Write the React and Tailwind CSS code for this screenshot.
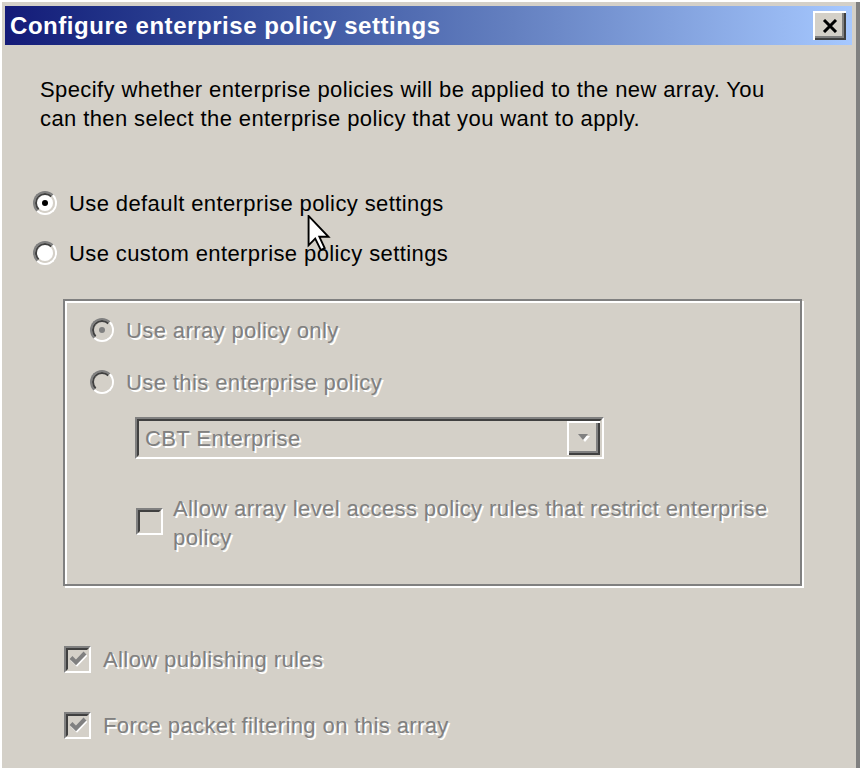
import React from "react";

const font = { fontFamily: '"Liberation Sans", Arial, sans-serif' };

function Radio({ checked, disabled }) {
    return (
        <span className="relative inline-flex h-6 w-6 shrink-0 rounded-full border-2 border-t-[#808080] border-l-[#808080] border-b-white border-r-white">
            <span
                className={
                    "flex h-full w-full items-center justify-center rounded-full border-2 border-t-[#404040] border-l-[#404040] border-b-[#d4d0c8] border-r-[#d4d0c8] " +
                    (disabled ? "bg-[#d4d0c8]" : "bg-white")
                }
            >
                {checked && (
                    <span className={"h-[6px] w-[6px] rounded-full " + (disabled ? "bg-[#808080]" : "bg-black")} />
                )}
            </span>
        </span>
    );
}

function Checkbox({ checked, disabled }) {
    return (
        <span className="inline-flex h-[27px] w-[27px] shrink-0 border-2 border-t-[#808080] border-l-[#808080] border-b-white border-r-white">
            <span
                className={
                    "flex h-full w-full items-center justify-center border-2 border-t-[#404040] border-l-[#404040] border-b-[#d4d0c8] border-r-[#d4d0c8] " +
                    (disabled ? "bg-[#d4d0c8]" : "bg-white")
                }
            >
                {checked && (
                    <svg width="18" height="16" viewBox="0 0 18 16">
                        <path d="M2 6.5 L7 11.5 L16 2" fill="none" stroke="#fff" strokeWidth="4" transform="translate(1 1.5)" />
                        <path d="M2 6.5 L7 11.5 L16 2" fill="none" stroke="#808080" strokeWidth="4" />
                    </svg>
                )}
            </span>
        </span>
    );
}

function Label({ children, disabled }) {
    return (
        <span
            className={
                disabled
                    ? "text-[#808080] [text-shadow:2px_2px_0_#ffffff]"
                    : "text-black"
            }
        >
            {children}
        </span>
    );
}

export default function App() {
    return (
        <div
            className="relative h-[768px] w-[860px] overflow-hidden bg-[#d4d0c8] pt-[6px] pl-[5px] pr-[8px] text-[22px] leading-[29px] tracking-[0.4px] shadow-[inset_2px_2px_0_#ffffff,inset_-4px_0_0_#808080]"
            style={font}
        >
            {/* Title bar */}
            <div className="flex h-[39px] items-center justify-between bg-gradient-to-r from-[#141a78] via-[#6480c0] via-60% to-[#a6c8ff] pl-[5px] pr-[6px]">
                <span className="text-[24px] font-bold tracking-[0.55px] text-white">
                    Configure enterprise policy settings
                </span>
                <button className="flex h-[29px] w-[33px] items-center justify-center bg-[#d4d0c8] shadow-[inset_2px_2px_0_#ffffff,inset_-2px_-2px_0_#404040,inset_-4px_-4px_0_#808080]">
                    <svg width="16" height="14" viewBox="0 0 16 14">
                        <path d="M2 1 L14 13 M14 1 L2 13" stroke="#000" strokeWidth="3" />
                    </svg>
                </button>
            </div>

            {/* Body */}
            <div className="pl-[28px] pr-[30px]">
                <p className="mt-[30px] pl-[7px]">
                    Specify whether enterprise policies will be applied to the new array. You
                    <br />
                    can then select the enterprise policy that you want to apply.
                </p>

                <div className="mt-[52px] flex flex-col gap-[14px]">
                    <label className="flex h-[36px] items-center gap-[12px]">
                        <Radio checked />
                        <Label>Use default enterprise policy settings</Label>
                    </label>
                    <label className="flex h-[36px] items-center gap-[12px]">
                        <Radio />
                        <Label>Use custom enterprise policy settings</Label>
                    </label>
                </div>

                {/* Group box */}
                <div className="ml-[30px] mt-[28px] h-[287px] w-[739px] border-2 border-[#808080] pl-[25px] pt-[11px] shadow-[inset_2px_2px_0_#ffffff,2px_2px_0_#ffffff]">
                    <div className="flex flex-col gap-[16px]">
                        <div className="flex h-[36px] items-center gap-[12px]">
                            <Radio checked disabled />
                            <Label disabled>Use array policy only</Label>
                        </div>
                        <div className="flex h-[36px] items-center gap-[12px]">
                            <Radio disabled />
                            <Label disabled>Use this enterprise policy</Label>
                        </div>
                    </div>

                    <div className="ml-[45px] mt-[17px] flex h-[42px] w-[469px] items-center justify-between border-2 border-t-[#808080] border-l-[#808080] border-b-white border-r-white">
                        <div className="flex h-full w-full items-center justify-between border-2 border-t-[#404040] border-l-[#404040] border-b-[#d4d0c8] border-r-[#d4d0c8] pl-[6px]">
                            <Label disabled>CBT Enterprise</Label>
                            <span className="flex h-full w-[33px] items-center justify-center shadow-[inset_2px_2px_0_#ffffff,inset_-2px_-2px_0_#404040,inset_-4px_-4px_0_#808080]">
                                <svg width="14" height="10" viewBox="0 0 14 10">
                                    <path d="M3 3 H13 L8 9 Z" fill="#fff" />
                                    <path d="M1 1 H11 L6 7 Z" fill="#808080" />
                                </svg>
                            </span>
                        </div>
                    </div>

                    <div className="ml-[46px] mt-[35px] flex items-start gap-[10px]">
                        <span className="mt-[14px]">
                            <Checkbox disabled />
                        </span>
                        <span className="leading-[29px]">
                            <Label disabled>
                                Allow array level access policy rules that restrict enterprise
                                <br />
                                policy
                            </Label>
                        </span>
                    </div>
                </div>

                <div className="mt-[55px] flex flex-col gap-[30px] pl-[31px]">
                    <div className="flex h-[36px] items-center gap-[12px]">
                        <Checkbox checked disabled />
                        <Label disabled>Allow publishing rules</Label>
                    </div>
                    <div className="flex h-[36px] items-center gap-[12px]">
                        <Checkbox checked disabled />
                        <Label disabled>Force packet filtering on this array</Label>
                    </div>
                </div>
            </div>

            {/* Mouse pointer */}
            <svg className="absolute left-[307px] top-[215px]" width="24" height="36" viewBox="0 0 12 19">
                <path d="M0.5 0.5 V16 L4 12.5 L7 18.5 L9 17.5 L6.2 11.5 H11 Z" fill="#fff" stroke="#000" strokeWidth="1" />
            </svg>
        </div>
    );
}
